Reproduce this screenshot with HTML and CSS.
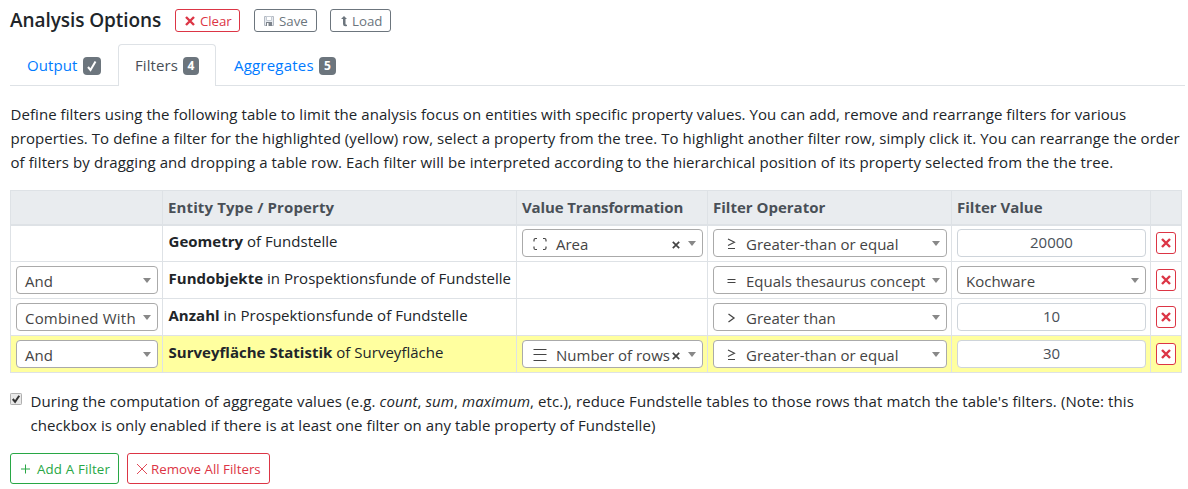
FILE: index.html
```html
<!DOCTYPE html>
<html lang="en">
<head>
<meta charset="utf-8">
<title>Analysis Options</title>
<link rel="stylesheet" href="styles.css">
</head>
<body>
<svg class="defs" width="0" height="0" aria-hidden="true">
  <symbol id="times" viewBox="0 0 12 12"><path d="M2 2l8 8M10 2l-8 8" fill="none" stroke="currentColor" stroke-width="2.4"/></symbol>
  <symbol id="clear" viewBox="0 0 8 8"><path d="M.8 .8l6.4 6.4M7.200 .8l-6.400 6.400" fill="none" stroke="currentColor" stroke-width="1.700"/></symbol>
  <symbol id="ge" viewBox="0 0 12 12"><path d="M2 1l6.500 3.200L2 7.400M2 10.500h7" fill="none" stroke="currentColor" stroke-width="1.100"/></symbol>
  <symbol id="gt" viewBox="0 0 12 12"><path d="M2.500 2l5.500 4-5.500 4" fill="none" stroke="currentColor" stroke-width="1.300"/></symbol>
  <symbol id="eq" viewBox="0 0 12 12"><path d="M1.500 4.500h8M1.500 7.500h8" fill="none" stroke="currentColor"/></symbol>
</svg>

<header class="head">
  <h1 class="title">Analysis Options</h1>
  <button class="btn btn-xs clear"><svg class="i12"><use href="#times"/></svg><span>Clear</span></button>
  <button class="btn btn-xs save"><svg class="i12" viewBox="0 0 12 12"><path d="M1.500 1.500h9v9h-9z" fill="#e8ebf0" stroke="#b4bac3"/><path d="M3.500 1.500h5v4h-5z" fill="#fff" stroke="#c5cbd3"/><path d="M3 7h6v4H3z" fill="#7c838b"/><path d="M4 8h1.500v3H4z" fill="#fff"/></svg><span>Save</span></button>
  <button class="btn btn-xs load"><svg class="i12" viewBox="0 0 12 12"><path d="M5 1l3 3H6.500v5q0 1 1.500.8v1.300Q4 12 4 9V4H2z" fill="currentColor"/></svg><span>Load</span></button>
</header>

<nav class="tabs">
  <a class="tab output"><span>Output</span><b class="badge wide"><svg class="check" viewBox="0 0 12 12"><path d="M2 7l2.500 3L9.500 1.500" fill="none" stroke="#fff" stroke-width="2"/></svg></b></a>
  <a class="tab active"><span>Filters</span><b class="badge">4</b></a>
  <a class="tab aggregates"><span>Aggregates</span><b class="badge">5</b></a>
</nav>

<p class="intro"><span class="l1">Define filters using the following table to limit the analysis focus on entities with specific property values. You can add, remove and rearrange filters for various</span><br><span class="l2">properties. To define a filter for the highlighted (yellow) row, select a property from the tree. To highlight another filter row, simply click it. You can rearrange the order</span><br><span class="l3">of filters by dragging and dropping a table row. Each filter will be interpreted according to the hierarchical position of its property selected from the the tree.</span></p>

<table class="filters">
  <colgroup><col class="c1"><col class="c2"><col class="c3"><col class="c4"><col class="c5"><col class="c6"></colgroup>
  <thead><tr><th></th><th class="wider">Entity Type / Property</th><th class="tight">Value Transformation</th><th>Filter Operator</th><th>Filter Value</th><th></th></tr></thead>
  <tbody>
    <tr>
      <td></td>
      <td class="prop"><b>Geometry</b> of Fundstelle</td>
      <td><div class="select"><svg class="i14" viewBox="0 0 14 14"><path d="M1 4.500V3q0-1.500 1.500-1.500H4M10 1.500h1.500Q13 1.500 13 3v1.500M13 9.500V11q0 1.500-1.500 1.500H10M4 12.500H2.500Q1 12.500 1 11V9.500" fill="none" stroke="currentColor" stroke-width="1.200"/></svg><span class="label">Area</span><svg class="x"><use href="#clear"/></svg><i class="caret"></i></div></td>
      <td><div class="select"><svg class="op"><use href="#ge"/></svg><span class="label">Greater-than or equal</span><i class="caret"></i></div></td>
      <td><div class="input">20000</div></td>
      <td><button class="del"><svg class="i12"><use href="#times"/></svg></button></td>
    </tr>
    <tr>
      <td><div class="select"><span class="label">And</span><i class="caret"></i></div></td>
      <td class="prop"><b>Fundobjekte</b> in Prospektionsfunde of Fundstelle</td>
      <td></td>
      <td><div class="select"><svg class="op"><use href="#eq"/></svg><span class="label">Equals thesaurus concept</span><i class="caret"></i></div></td>
      <td><div class="select"><span class="label">Kochware</span><i class="caret"></i></div></td>
      <td><button class="del"><svg class="i12"><use href="#times"/></svg></button></td>
    </tr>
    <tr>
      <td><div class="select"><span class="label roomy">Combined With</span><i class="caret"></i></div></td>
      <td class="prop"><b>Anzahl</b> in Prospektionsfunde of Fundstelle</td>
      <td></td>
      <td><div class="select"><svg class="op"><use href="#gt"/></svg><span class="label">Greater than</span><i class="caret"></i></div></td>
      <td><div class="input">10</div></td>
      <td><button class="del"><svg class="i12"><use href="#times"/></svg></button></td>
    </tr>
    <tr class="current">
      <td><div class="select"><span class="label">And</span><i class="caret"></i></div></td>
      <td class="prop"><b>Surveyfläche Statistik</b> of Surveyfläche</td>
      <td><div class="select"><svg class="i14" viewBox="0 0 14 14"><path d="M.5 1.500h13M.5 6.500h13M.5 12.500h13" fill="none" stroke="currentColor"/></svg><span class="label">Number of rows</span><svg class="x"><use href="#clear"/></svg><i class="caret"></i></div></td>
      <td><div class="select"><svg class="op"><use href="#ge"/></svg><span class="label">Greater-than or equal</span><i class="caret"></i></div></td>
      <td><div class="input">30</div></td>
      <td><button class="del"><svg class="i12"><use href="#times"/></svg></button></td>
    </tr>
  </tbody>
</table>

<div class="option">
  <svg class="checkbox" viewBox="0 0 13 13"><rect x=".5" y=".5" width="12" height="12" rx="1" fill="#e9e9e9" stroke="#a6a6a6"/><path d="M3 6.500l2.500 3L10 3" fill="none" stroke="#333" stroke-width="2.200"/></svg>
  <p><span class="n1">During the computation of aggregate values (e.g. <em>count</em>, <em>sum</em>, <em>maximum</em>, etc.), reduce Fundstelle tables to those rows that match the table's filters. (Note: this</span><br><span class="n2">checkbox is only enabled if there is at least one filter on any table property of Fundstelle)</span></p>
</div>

<div class="actions">
  <button class="btn add"><svg class="i12" viewBox="0 0 12 12"><path d="M5.500 1.500v9M1 6h9" fill="none" stroke="currentColor"/></svg><span>Add A Filter</span></button>
  <button class="btn remove"><svg class="i12" viewBox="0 0 12 12"><path d="M1 1l10 10M11 1L1 11" fill="none" stroke="currentColor" stroke-width=".9"/></svg><span>Remove All Filters</span></button>
</div>
</body>
</html>
```
FILE: styles.css
```css
* { box-sizing: border-box; }
body { margin: 0; padding: 9px 3px 0 10px; background: #fff; color: #212529; font: 15px/24px "Open Sans", "Noto Sans", sans-serif; white-space: nowrap; overflow: hidden; }
.defs { display: block; position: absolute; }
p, h1 { margin: 0; }
svg { flex: none; }
.i12 { width: 12px; height: 12px; }
.i14 { width: 14px; height: 14px; }

.head { display: flex; height: 35px; align-items: flex-start; }
.title { width: 165px; font-size: 19px; font-weight: 600; line-height: 23px; letter-spacing: -.07px; }
.btn { display: flex; align-items: center; border: 1px solid; border-radius: 3px; background: #fff; padding: 0; font: 13.3px/20px "Open Sans", sans-serif; }
.btn-xs { height: 23px; padding-left: 8px; gap: 4px; }
.clear { width: 65px; color: #dc3545; margin-right: 14px; }
.clear span { letter-spacing: -.1px; }
.save { width: 63px; color: #6c757d; margin-right: 13px; }
.load { width: 61px; color: #6c757d; gap: 1px; }

.tabs { display: flex; height: 42px; border-bottom: 1px solid #dee2e6; }
.tab { display: flex; align-items: center; height: 42px; padding: 0 17px; gap: 5px; color: #007bff; border: 0 solid #dee2e6; letter-spacing: .1px; }
.tab span { flex: 1; }
.output { width: 108px; }
.active { width: 98px; padding: 0 16px 2px; color: #495057; background: #fff; border-width: 1px 1px 0; border-radius: 4px 4px 0 0; }
.aggregates { width: 137px; padding-left: 18px; letter-spacing: .2px; }
.badge { display: flex; align-items: center; justify-content: center; width: 16px; height: 18px; margin-top: 2px; border-radius: 4px; background: #6c757d; color: #fff; font-size: 12px; line-height: 18px; letter-spacing: 0; }
.aggregates .badge { width: 17px; }
.wide { width: 19px; }
.check { width: 12px; height: 12px; }

.intro { margin-top: 16px; padding-left: .5px; }
.l1 { letter-spacing: .063px; }
.l2 { letter-spacing: .057px; }
.l3 { letter-spacing: .09px; }

.filters { margin-top: 16px; width: 1171px; table-layout: fixed; border-collapse: collapse; }
.c1 { width: 152px; } .c2 { width: 354px; } .c3 { width: 191px; } .c4 { width: 244px; } .c5 { width: 199px; } .c6 { width: 31px; }
.filters th, .filters td { border: 1px solid #dee2e6; padding: 0 4px 0 5px; text-align: left; vertical-align: middle; }
.filters th { height: 34px; background: #e9ecef; border-bottom-width: 2px; color: #495057; font-weight: 700; }
.filters .wider { letter-spacing: .12px; }
.filters .tight { letter-spacing: -.13px; }
.filters td { height: 37px; }
.filters .prop { padding-bottom: 5px; padding-left: 5.5px; letter-spacing: .02px; }
.current { background: #ffff9f; }
.select, .input { display: flex; align-items: center; height: 28px; border: 1px solid #aaa; border-radius: 4px; background: #fff; color: #444; }
.select { padding: 0 6px 0 8px; }
.select .label { flex: 1; padding-top: 2px; }
.select .roomy { letter-spacing: .2px; }
.select .i14 { margin: 2px 9px 0 2px; }
.op { width: 12px; height: 12px; margin: 2px 8px 0 4px; }
.x { width: 8px; height: 8px; margin: 4px 8px 0 0; }
.caret { border: 4px solid transparent; border-top: 5px solid #888; border-bottom: 0; }
.input { justify-content: center; border-color: #ced4da; color: #495057; padding-bottom: 2px; }
.del { display: flex; align-items: center; justify-content: center; width: 20px; height: 22px; padding: 0; border: 1px solid #dc3545; border-radius: 3px; color: #dc3545; background: #fff; }

.option { display: flex; margin-top: 16px; }
.checkbox { width: 12px; height: 12px; margin: 4px 8.5px 0 0; }
.n1 { letter-spacing: .105px; }
.n2 { letter-spacing: .07px; }
.actions { display: flex; gap: 8px; margin-top: 16px; }
.actions .btn { height: 31px; gap: 5px; }
.add { width: 109px; color: #28a745; padding-left: 9px; letter-spacing: .15px; }
.actions .remove { width: 143px; color: #dc3545; padding-left: 8px; gap: 3px; }
```
